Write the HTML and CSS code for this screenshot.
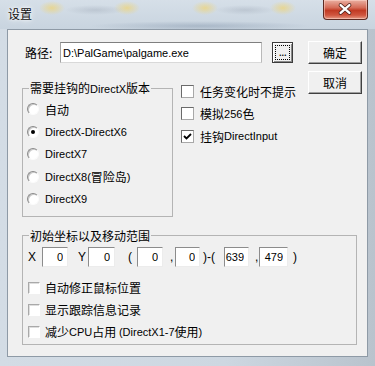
FILE: index.html
```html
<!DOCTYPE html>
<html lang="zh-CN">
<head>
  <meta charset="UTF-8">
  <title>设置</title>
  <link rel="stylesheet" href="styles.css">
</head>
<body>

<div class="window">
  <div class="titlebar">
    <span class="title">设置</span>
    <span class="close">
      <svg width="45" height="20" viewBox="0 0 45 20">
        <path d="M18 6 L27 14 M27 6 L18 14" stroke="#4a1e16" stroke-width="4" stroke-linecap="round"/>
        <path d="M18 6 L27 14 M27 6 L18 14" stroke="#fff" stroke-width="2.4" stroke-linecap="round"/>
      </svg>
    </span>
  </div>

  <div class="client">
    <div class="upper">
      <div class="left">
        <div class="path-row">
          <label class="path-label" for="path">路径:</label>
          <input id="path" class="path-input" type="text" value="D:\PalGame\palgame.exe">
          <button class="btn-browse"><span class="focus">...</span></button>
        </div>

        <div class="options">
          <fieldset class="group group-dx">
            <legend>需要挂钩的<span class="en">DirectX</span>版本</legend>
            <div class="group-body">
              <div class="radio-row"><span class="radio"></span>自动</div>
              <div class="radio-row"><span class="radio checked"></span><span class="en">DirectX-DirectX6</span></div>
              <div class="radio-row"><span class="radio"></span><span class="en">DirectX7</span></div>
              <div class="radio-row"><span class="radio"></span><span class="en">DirectX8(</span>冒险岛<span class="en">)</span></div>
              <div class="radio-row"><span class="radio"></span><span class="en">DirectX9</span></div>
            </div>
          </fieldset>

          <div class="checks">
            <div class="check-row"><span class="check"></span>任务变化时不提示</div>
            <div class="check-row"><span class="check"></span>模拟<span class="en">256</span>色</div>
            <div class="check-row">
              <span class="check">
                <svg width="11" height="11" viewBox="0 0 11 11"><path d="M2 5 L4.5 7.5 L9 3" fill="none" stroke="#000" stroke-width="1.8"/></svg>
              </span>挂钩<span class="en">DirectInput</span>
            </div>
          </div>
        </div>
      </div>

      <div class="side">
        <button class="btn">确定</button>
        <button class="btn">取消</button>
      </div>
    </div>

    <fieldset class="group group-pos">
      <legend>初始坐标以及移动范围</legend>
      <div class="group-body">
        <div class="coords">
          <span class="sep sep-x">X</span>
          <input class="num w26" type="text" value="0">
          <span class="sep sep-y">Y</span>
          <input class="num w27" type="text" value="0">
          <span class="sep sep-open">(</span>
          <input class="num w26" type="text" value="0">
          <span class="sep sep-comma">,</span>
          <input class="num w25" type="text" value="0">
          <span class="sep sep-mid">)-(</span>
          <input class="num w25" type="text" value="639">
          <span class="sep sep-comma2">,</span>
          <input class="num w29" type="text" value="479">
          <span class="sep sep-close">)</span>
        </div>
        <div class="check-row"><span class="check soft"></span>自动修正鼠标位置</div>
        <div class="check-row"><span class="check soft"></span>显示跟踪信息记录</div>
        <div class="check-row"><span class="check soft"></span>减少<span class="en">CPU</span>占用 <span class="en">(DirectX1-7</span>使用<span class="en">)</span></div>
      </div>
    </fieldset>
  </div>
</div>

</body>
</html>
```

FILE: styles.css
```css
* {
  box-sizing: border-box;
}

body {
  margin: 0;
  width: 375px;
  height: 366px;
  overflow: hidden;
  font-family: "Noto Sans CJK SC", "Liberation Sans", sans-serif;
  font-size: 12px;
  color: #000;
  background: #c9d4de;
}

/* latin runs are drawn narrower than the CJK text, as in the dialog font */
.en {
  font-family: "Liberation Sans", sans-serif;
  font-size: 11px;
}

.window {
  width: 375px;
  height: 366px;
  background: linear-gradient(to right, #d3dce5, #cdd7e1 60%, #b9c3cd);
}

.titlebar {
  height: 29px;
  display: flex;
  justify-content: space-between;
  align-items: flex-start;
  padding: 0 7px 0 8px;
  background:
    radial-gradient(ellipse 13px 7px at 52px 8px, rgba(238, 212, 120, 0.75), transparent),
    radial-gradient(ellipse 13px 7px at 127px 8px, rgba(238, 212, 120, 0.75), transparent),
    radial-gradient(ellipse 13px 7px at 205px 8px, rgba(238, 212, 120, 0.75), transparent),
    radial-gradient(ellipse 13px 7px at 283px 8px, rgba(238, 212, 120, 0.75), transparent),
    radial-gradient(ellipse 30px 5px at 95px 10px, rgba(150, 160, 175, 0.35), transparent),
    radial-gradient(ellipse 30px 5px at 245px 10px, rgba(150, 160, 175, 0.35), transparent),
    radial-gradient(ellipse 110px 5px at 200px 26px, rgba(110, 130, 155, 0.35), transparent),
    linear-gradient(#d6dfe8, #c8d4df);
}

.title {
  margin-top: 6px;
  line-height: 16px;
  color: #111;
  text-shadow: 0 0 6px #fff, 0 0 3px #fff;
}

.close {
  display: flex;
  width: 45px;
  height: 20px;
  border: 1px solid #5c2a22;
  border-top: none;
  border-radius: 0 0 4px 4px;
  background: linear-gradient(#eab0a2, #d56c58 40%, #c13a23 55%, #d0563f 80%, #e69a84);
  box-shadow: inset 0 0 0 1px rgba(255, 220, 210, 0.5);
}

.close svg {
  margin: -1px 0 0 -1px;
}

.client {
  margin: 0 7px;
  height: 328px;
  border: 1px solid #8e9aa6;
  background: #f0f0f0;
  padding: 11px 5px 0 14px;
}

.upper {
  display: flex;
}

.left {
  flex: 1;
}

.side {
  width: 54px;
  display: flex;
  flex-direction: column;
  gap: 7px;
}

.btn {
  width: 54px;
  height: 23px;
  padding: 0;
  font: inherit;
  color: #000;
  background: #f0f0f0;
  border: 1px solid;
  border-color: #fff #404040 #404040 #fff;
  box-shadow: inset -1px -1px 0 #a0a0a0;
}

.path-row {
  display: flex;
  align-items: center;
  height: 21px;
  margin-top: 1px;
  padding-left: 3px;
}

.path-label {
  width: 35px;
  line-height: 16px;
}

.path-input {
  width: 202px;
  height: 21px;
  padding: 0 2px;
  font-family: "Liberation Sans", sans-serif;
  font-size: 11px;
  color: #000;
  background: #fff;
  border: 1px solid;
  border-color: #7f7f7f #b9b9b9 #d9d9d9 #a3a3a3;
  outline: none;
}

.btn-browse {
  width: 21px;
  height: 21px;
  margin-left: 10px;
  padding: 2px;
  font: inherit;
  background: #f0f0f0;
  border: 1px solid #3c3c3c;
  box-shadow: inset 1px 1px 0 #fff, inset -1px -1px 0 #8a8a8a;
  display: flex;
}

.btn-browse .focus {
  flex: 1;
  border: 1px dotted #000;
  line-height: 10px;
  font-size: 11px;
  text-align: center;
  letter-spacing: -0.5px;
}

.options {
  display: flex;
  align-items: flex-start;
  margin-top: 17px;
}

.group {
  margin: 0;
  padding: 0;
  min-width: 0;
  border: 1px solid #b4b4b4;
}

.group legend {
  margin-left: 6px;
  padding: 0 1px;
  line-height: 14px;
}

.group-dx {
  width: 151px;
  margin-top: 1px;
}

.group-dx .group-body {
  padding: 2px 0 5px 4px;
}

.radio-row,
.check-row {
  display: flex;
  align-items: center;
  height: 22.5px;
  white-space: pre;
}

.radio {
  width: 12px;
  height: 12px;
  margin-right: 6px;
  border-radius: 50%;
  border: 1px solid;
  border-color: #8a8a8a #fbfbfb #fbfbfb #8a8a8a;
  box-shadow: inset 1px 1px 0 #c8c8c8;
  background: #fff;
  display: flex;
  align-items: center;
  justify-content: center;
}

.radio.checked::after {
  content: "";
  width: 4px;
  height: 4px;
  border-radius: 50%;
  background: #000;
}

.checks {
  margin-left: 8px;
}

.check {
  width: 13px;
  height: 13px;
  margin-right: 6px;
  border: 1px solid;
  border-color: #6a6a6a #a8a8a8 #a8a8a8 #6a6a6a;
  background: #fff;
  display: flex;
  align-items: center;
  justify-content: center;
}

.group-pos {
  margin: 12px 5px 0 0;
}

.group-pos .group-body {
  padding: 4px 0 1px 5px;
}

.group-pos .check-row {
  height: 22px;
}

.check.soft {
  width: 12px;
  height: 12px;
  margin-right: 5px;
  border-color: #a9a9a9 #fff #fff #a9a9a9;
  box-shadow: inset 1px 1px 0 #dedede;
}

.coords {
  display: flex;
  align-items: center;
  height: 20px;
  margin-bottom: 10px;
}

.sep {
  line-height: 16px;
  font-family: "Liberation Sans", sans-serif;
  font-size: 12px;
}

.sep-x { width: 14px; }
.sep-y { width: 20px; padding-left: 10px; }
.sep-open { width: 22px; padding-left: 13px; }
.sep-comma { width: 12px; padding-left: 7px; }
.sep-mid { width: 24px; padding-left: 3px; }
.sep-comma2 { width: 10px; padding-left: 6px; }
.sep-close { padding-left: 5px; }

.num {
  height: 20px;
  padding: 0 4px 0 0;
  font-family: "Liberation Sans", sans-serif;
  font-size: 11px;
  color: #000;
  text-align: right;
  background: #fff;
  border: 1px solid;
  border-color: #8c8c8c #ececec #ececec #8c8c8c;
  outline: none;
}

.w25 { width: 25px; }
.w26 { width: 26px; }
.w27 { width: 27px; }
.w29 { width: 29px; }
```
